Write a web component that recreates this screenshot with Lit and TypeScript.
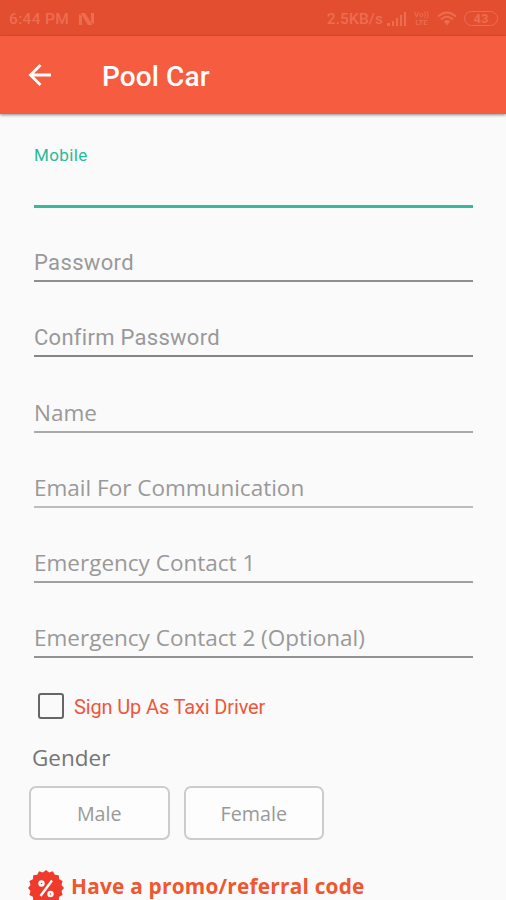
import { LitElement, html, css, svg } from "lit";
import { customElement } from "lit/decorators.js";

interface Field {
  label: string;
  face: "roboto" | "open";
  tone: string;
  spacing: string;
}

const FIELDS: Field[] = [
  { label: "Password", face: "roboto", tone: "#8e8e8e", spacing: "0.35px" },
  { label: "Confirm Password", face: "roboto", tone: "#868686", spacing: "0.28px" },
  { label: "Name", face: "open", tone: "#a9a9a9", spacing: "0px" },
  { label: "Email For Communication", face: "open", tone: "#bdbdbd", spacing: "0px" },
  { label: "Emergency Contact 1", face: "open", tone: "#a0a0a0", spacing: "0px" },
  { label: "Emergency Contact 2 (Optional)", face: "open", tone: "#929292", spacing: "0px" },
];

// Scalloped outline of the promo badge, centred on 18,18.
function badgePath(teeth = 16, outer = 18, inner = 15.8): string {
  const points: string[] = [];
  for (let i = 0; i < teeth * 2; i++) {
    const r = i % 2 ? inner : outer;
    const a = (Math.PI * i) / teeth - Math.PI / 2;
    points.push(`${(18 + r * Math.cos(a)).toFixed(2)} ${(18 + r * Math.sin(a)).toFixed(2)}`);
  }
  return `M${points.join("L")}Z`;
}

@customElement("status-bar")
class StatusBar extends LitElement {
  static styles = css`
    :host {
      display: flex;
      align-items: center;
      justify-content: space-between;
      height: 36px;
      box-sizing: border-box;
      padding: 1px 8px 0 9px;
      background: #e34e30;
      color: #ed6d51;
      font: 500 15.5px/20px Roboto, sans-serif;
    }
    .side { display: flex; align-items: center; }
    .time { letter-spacing: 0.35px; }
    .rate { letter-spacing: 0.1px; margin-right: 4px; }
    svg { display: block; flex: none; }
    .n { margin-left: 10px; }
    .volte {
      width: 17px;
      margin: 0 7px 0 6px;
      text-align: center;
      font: 500 8px/8px Roboto, sans-serif;
    }
    .battery {
      box-sizing: border-box;
      width: 34px;
      height: 15px;
      margin-left: 7px;
      border: 1.5px solid currentColor;
      border-radius: 8px;
      text-align: center;
      font: 700 13px/13px Roboto, sans-serif;
    }
  `;
  render() {
    return html`
      <div class="side">
        <span class="time">6:44 PM</span>
        <svg class="n" width="15" height="12" viewBox="0 0 15 12">
          <path d="M0 1L3 3V12H0Z M1.5 0H6L13.5 12H9Z M12 0H15V11L12 9Z" fill="currentColor" />
        </svg>
      </div>
      <div class="side">
        <span class="rate">2.5KB/s</span>
        <svg width="20" height="15" viewBox="0 0 20 15" fill="currentColor">
          <path d="M0 12h3v3H0zM5 10h2v5H5zM9 7h2v8H9zM13 4h2v11h-2zM17 1h2v14h-2z" />
        </svg>
        <div class="volte">Vo))<br />LTE</div>
        <svg width="20" height="15" viewBox="0 0 20 15" fill="none" stroke="currentColor" stroke-width="2">
          <path d="M1 5.5Q10-2.5 19 5.5M4 8.5Q10 3 16 8.5" />
          <path d="M6.8 10.2Q10 7.6 13.2 10.2L10 14.5Z" fill="currentColor" stroke="none" />
        </svg>
        <div class="battery">43</div>
      </div>
    `;
  }
}

@customElement("app-root")
class AppRoot extends LitElement {
  static styles = css`
    :host {
      display: block;
      height: 900px;
      overflow: hidden;
      background: #fafafa;
      font-family: "Open Sans", "Noto Sans", sans-serif;
    }
    .appbar {
      display: flex;
      align-items: center;
      height: 78px;
      box-sizing: border-box;
      padding: 3px 0 0 28px;
      background: #f65c3f;
      color: #fff;
      box-shadow: 0 1px 3px rgba(0, 0, 0, 0.45);
    }
    .appbar svg { display: block; margin-bottom: 4px; }
    .title {
      margin: 0 0 0 50px;
      font: 500 28px/34px Roboto, sans-serif;
      letter-spacing: 0.1px;
    }
    .form { padding: 0 33px 0 34px; }
    .field {
      display: flex;
      flex-direction: column;
      justify-content: flex-end;
      height: 75.2px;
      box-sizing: border-box;
      font-size: 22.5px;
      line-height: 30px;
      color: #999;
      white-space: nowrap;
    }
    .field .text { padding-bottom: 3px; }
    .roboto { font-family: Roboto, sans-serif; font-size: 22px; }
    .roboto .text { padding-bottom: 2px; }
    .rule { height: 2px; flex: none; }
    .active {
      height: 94px;
      justify-content: space-between;
      padding-top: 31px;
      font: 400 17px/20px Roboto, sans-serif;
      letter-spacing: 0.4px;
      color: #2bb998;
    }
    .active .rule { height: 3px; background: #35ba9c; }
    .fields { margin-top: -1px; }
    .check {
      display: flex;
      align-items: center;
      height: 28px;
      margin: 33.8px 0 0 38px;
      font: 400 20px/28px Roboto, sans-serif;
      letter-spacing: -0.14px;
      color: #f0563b;
    }
    .check .label { padding-top: 2px; }
    .box {
      box-sizing: border-box;
      width: 26px;
      height: 26px;
      margin-right: 10px;
      border: 2.5px solid #666;
      border-radius: 3px;
    }
    .gender {
      margin: 23px 0 0 32px;
      font-size: 22.5px;
      line-height: 30px;
      color: #757575;
    }
    .options { display: flex; gap: 14px; margin: 13px 0 0 29px; }
    .option {
      box-sizing: border-box;
      width: 140.5px;
      height: 54px;
      border: 2px solid #ccc;
      border-radius: 7px;
      background: #fdfdfd;
      text-align: center;
      font-size: 19.7px;
      line-height: 52px;
      color: #999;
    }
    .promo {
      display: flex;
      align-items: flex-start;
      margin: 30px 0 0 28px;
      font-size: 20.8px;
      font-weight: 700;
      line-height: 33px;
      letter-spacing: 0.23px;
      color: #f0562f;
      white-space: nowrap;
    }
    .promo svg { display: block; margin-right: 7px; }
  `;

  render() {
    return html`
      <status-bar></status-bar>
      <header class="appbar">
        <svg width="24" height="24" viewBox="0 0 24 24" fill="none" stroke="#fff" stroke-width="2.8">
          <path d="M12.5 2L2.5 12L12.5 22M2.5 12H23" />
        </svg>
        <h1 class="title">Pool Car</h1>
      </header>
      <main>
        <div class="form">
          <div class="field active">
            <span>Mobile</span>
            <div class="rule"></div>
          </div>
          <div class="fields">
            ${FIELDS.map(
              (f) => html`<div class="field ${f.face}">
                <span class="text" style="letter-spacing:${f.spacing}">${f.label}</span>
                <div class="rule" style="background:${f.tone}"></div>
              </div>`
            )}
          </div>
        </div>
        <div class="check"><span class="box"></span><span class="label">Sign Up As Taxi Driver</span></div>
        <div class="gender">Gender</div>
        <div class="options">
          <div class="option">Male</div>
          <div class="option">Female</div>
        </div>
        <div class="promo">
          <svg width="36" height="36" viewBox="0 0 36 36">
            <path d=${badgePath()} fill="#ee3b2b" />
            ${svg`<g fill="none" stroke="#fff" stroke-width="2.4">
              <path d="M24 10.5L12.5 26" />
              <circle cx="13.5" cy="13.5" r="2" />
              <circle cx="22.5" cy="24" r="2" />
            </g>`}
          </svg>
          <span>Have a promo/referral code</span>
        </div>
      </main>
    `;
  }
}
